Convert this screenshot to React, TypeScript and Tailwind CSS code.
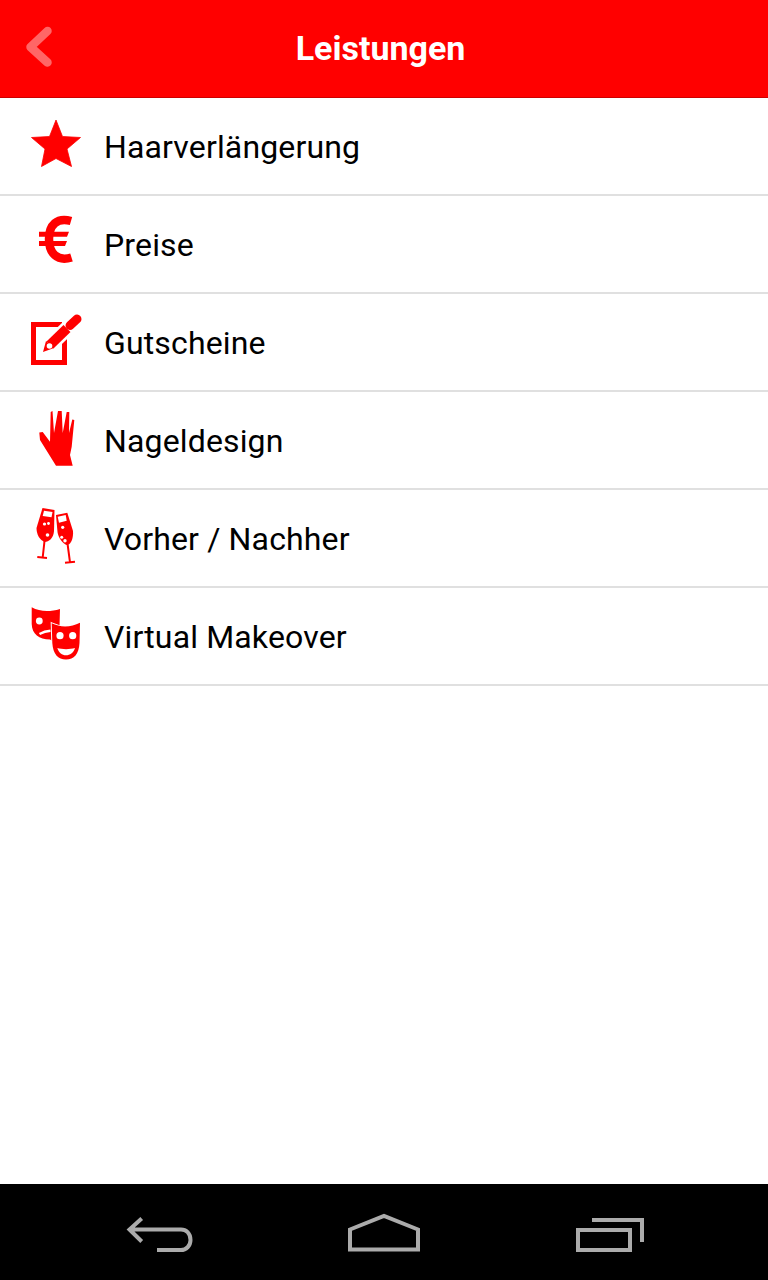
import type { ReactNode } from "react"

const iconProps = {
  width: 60,
  height: 97,
  viewBox: "0 0 60 97",
  className: "shrink-0",
}

function StarIcon() {
  return (
    <svg {...iconProps}>
      <polygon
        points="30,22 36.5,38.5 54.5,39.5 41,51 45.5,68.5 30,60.5 15.5,68.5 19,51 5.5,39.5 23.5,38.5"
        fill="#ff0000"
        stroke="#ff0000"
        strokeWidth="0.8"
        strokeLinejoin="round"
      />
    </svg>
  )
}

function EuroIcon() {
  return (
    <svg {...iconProps}>
      <path
        d="M45 25 C31 21 23 29 23 43 C23 57 31 66 45.5 61.5"
        fill="none"
        stroke="#ff0000"
        strokeWidth="8.5"
      />
      <path d="M13 35.7 H43 L41 40.7 H13 Z M13 45 H41 L39 50 H13 Z" fill="#ff0000" />
    </svg>
  )
}

function NoteIcon() {
  return (
    <svg {...iconProps}>
      <path
        d="M36 30.5 H7.5 V68.5 H38.5 V44"
        fill="none"
        stroke="#ff0000"
        strokeWidth="5"
      />
      <path d="M24 51 L51 25" stroke="#ffffff" strokeWidth="15" />
      <path d="M24 51 L41 34.5" stroke="#ff0000" strokeWidth="10" />
      <path d="M44 31.5 L51 25" stroke="#ff0000" strokeWidth="9" strokeLinecap="round" />
      <polygon points="17,58 20,47 28,54" fill="#ff0000" />
      <circle cx="23.5" cy="52" r="2.8" fill="#ffffff" />
    </svg>
  )
}

function HandIcon() {
  return (
    <svg {...iconProps}>
      <path
        d="M46.7 73.7 H30 L14 48 L13.3 40.5 L16.7 40 L24 49.7 L24.7 20 L26.5 19 L28 41 L32 19 L35.7 19 L36.7 41 L40.7 20 L43.3 20 L43 41 L46.3 27.5 L48.3 28 L45.7 54.7 L44 63 Z"
        fill="#ff0000"
      />
    </svg>
  )
}

function GlassesIcon() {
  return (
    <svg {...iconProps}>
      {/* left glass */}
      <path d="M16.5 18 L28.5 20 L28 41 C27.5 48 23 52 18.5 52 C14 50 10.5 45 10.5 38 Z" fill="#ff0000" />
      <path d="M18.5 51 L16.7 67.5 M11.3 67 L21 68" stroke="#ff0000" strokeWidth="2" fill="none" />
      <polygon points="18,20.7 26.5,22 25.5,27.3 16.7,26" fill="#ffffff" />
      <circle cx="18.5" cy="34" r="1.6" fill="#ffffff" />
      <circle cx="22.5" cy="33.5" r="1.4" fill="#ffffff" />
      <circle cx="21.5" cy="45" r="1.8" fill="#ffffff" />
      {/* right glass */}
      <path d="M30 25 L41.3 22.7 L47 41 C47.5 48 45.5 53 41.5 55.5 C36 53 32.5 48 31.5 42 Z" fill="#ff0000" />
      <path d="M41.7 55 L44 72.3 M39 72.7 L49 71.7" stroke="#ff0000" strokeWidth="2" fill="none" />
      <polygon points="31.7,26.7 39.7,25 40.7,30.7 33,32.7" fill="#ffffff" />
      <circle cx="36.7" cy="37.3" r="1.6" fill="#ffffff" />
      <circle cx="35.7" cy="47.3" r="1.5" fill="#ffffff" />
      <circle cx="39" cy="50.7" r="1.7" fill="#ffffff" />
    </svg>
  )
}

function MasksIcon() {
  return (
    <svg {...iconProps}>
      {/* sad mask, behind */}
      <path
        d="M5.7 19.3 C14 24 24 24 34 21 L33.5 38 L28 54 L24 51.5 C13 51.5 6 46 5.7 36 Z"
        fill="#ff0000"
      />
      <circle cx="13.3" cy="33" r="3.4" fill="#ffffff" />
      <path d="M13.5 46 C17 44 20.5 43 24.5 42.7" stroke="#ffffff" strokeWidth="2.4" fill="none" />
      {/* happy mask, in front */}
      <path
        d="M25.7 35.3 C34 39.5 45 39.5 54 34.7 L53.5 55 C53 66 48 71.5 40 71.5 C32 71.5 27 66 26.3 55 Z"
        fill="#ff0000"
        stroke="#ffffff"
        strokeWidth="2"
        paintOrder="stroke"
      />
      <circle cx="34" cy="47.7" r="3.6" fill="#ffffff" />
      <circle cx="46.7" cy="47.7" r="3.6" fill="#ffffff" />
      <path d="M31.3 60 C36 61.5 44 61.5 49 60 C47.5 65 44 67.3 40 67.3 C36 67.3 33 65 31.3 60 Z" fill="#ffffff" />
    </svg>
  )
}

const services: { label: string; icon: ReactNode }[] = [
  { label: "Haarverlängerung", icon: <StarIcon /> },
  { label: "Preise", icon: <EuroIcon /> },
  { label: "Gutscheine", icon: <NoteIcon /> },
  { label: "Nageldesign", icon: <HandIcon /> },
  { label: "Vorher / Nachher", icon: <GlassesIcon /> },
  { label: "Virtual Makeover", icon: <MasksIcon /> },
]

export default function App() {
  return (
    <div className="flex h-[1280px] w-[768px] flex-col bg-white font-['Roboto',sans-serif]">
      <header className="flex h-[98px] shrink-0 items-center border-b border-[#cc0000] bg-[#ff0000]">
        <button type="button" className="w-[60px] shrink-0">
          <svg width="60" height="97" viewBox="0 0 60 97">
            <path
              d="M47.5 31 L30.5 47 L47.5 62.5"
              fill="none"
              stroke="#ff6666"
              strokeWidth="8.5"
              strokeLinecap="round"
              strokeLinejoin="round"
            />
          </svg>
        </button>
        <h1 className="flex-1 pb-px text-center text-[34px] font-bold text-white">Leistungen</h1>
        <div className="w-[67px] shrink-0" />
      </header>

      <ul className="flex-1">
        {services.map((service) => (
          <li
            key={service.label}
            className="flex h-[98px] items-center border-b-2 border-[#e0e0e0] pl-[26px]"
          >
            {service.icon}
            <span className="ml-[18px] pt-[2px] text-[32px] tracking-[0.15px] text-black">
              {service.label}
            </span>
          </li>
        ))}
      </ul>

      <nav className="flex h-24 shrink-0 items-center bg-black pl-[120px]">
        <svg width="80" height="96" viewBox="120 1184 80 96">
          <path
            d="M141.7 1218.5 L129.5 1229.5 L141.7 1241.5 M129.5 1229.5 H181 C186 1229.5 190.5 1233 190.5 1240 C190.5 1246 186 1250 181 1250 H157"
            fill="none"
            stroke="#ababab"
            strokeWidth="4"
          />
        </svg>
        <svg width="80" height="96" viewBox="344 1184 80 96" className="ml-[144px]">
          <path
            d="M350 1229.5 L384 1216 L418 1229.5 V1249.5 H350 Z"
            fill="none"
            stroke="#ababab"
            strokeWidth="4"
          />
        </svg>
        <svg width="80" height="96" viewBox="570 1184 80 96" className="ml-[146px]">
          <path d="M578 1230 H630 V1250 H578 Z" fill="none" stroke="#ababab" strokeWidth="4" />
          <path d="M592 1220 H642 V1242" fill="none" stroke="#ababab" strokeWidth="4" />
        </svg>
      </nav>
    </div>
  )
}
